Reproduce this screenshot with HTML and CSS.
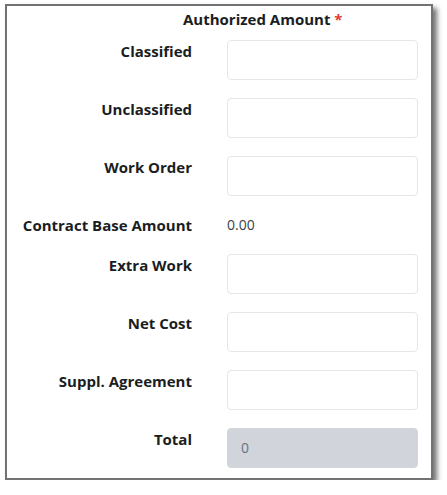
FILE: index.html
```html
<!DOCTYPE html>
<html>
<head>
<meta charset="utf-8">
<link rel="stylesheet" href="styles.css">
</head>
<body>
<div class="frame">
  <div class="heading">Authorized Amount <span class="req">*</span></div>
  <div class="rows">
    <div class="row"><div class="label">Classified</div><div class="input"></div></div>
    <div class="row"><div class="label">Unclassified</div><div class="input"></div></div>
    <div class="row"><div class="label">Work Order</div><div class="input"></div></div>
    <div class="row row-text"><div class="label">Contract Base Amount</div><div class="value">0.00</div></div>
    <div class="row"><div class="label">Extra Work</div><div class="input"></div></div>
    <div class="row"><div class="label">Net Cost</div><div class="input"></div></div>
    <div class="row"><div class="label">Suppl. Agreement</div><div class="input"></div></div>
    <div class="row"><div class="label">Total</div><div class="input input-disabled">0</div></div>
  </div>
</div>
</body>
</html>
```

FILE: styles.css
```css
html, body {
  margin: 0;
  padding: 0;
  background: #ffffff;
}
body {
  font-family: "Open Sans", "Noto Sans", sans-serif;
  font-size: 15px;
  color: #1a1d22;
}
.frame {
  box-sizing: border-box;
  width: 428px;
  margin: 4px 0 0 5px;
  border: 2px solid #727272;
  background: #ffffff;
  box-shadow: 4px 4px 5px rgba(0, 0, 0, 0.55);
  padding: 3px 0 10px 0;
}
.heading {
  font-weight: 700;
  line-height: 20px;
  padding-left: 176px;
  margin-bottom: 11px;
}
.req {
  color: #e53935;
}
.rows {
  display: flex;
  flex-direction: column;
  gap: 18px;
}
.row {
  display: grid;
  grid-template-columns: 185px 191px;
  column-gap: 35px;
  align-items: start;
}
.label {
  font-weight: 700;
  text-align: right;
  line-height: 20px;
  padding-top: 1px;
  white-space: nowrap;
}
.value {
  line-height: 22px;
  font-size: 14px;
  color: #3a3f45;
  font-weight: 400;
}
.input {
  box-sizing: border-box;
  height: 40px;
  border: 1px solid #e4e6ea;
  border-radius: 4px;
  background: #ffffff;
}
.input-disabled {
  background: #d1d5db;
  border-color: #d1d5db;
  color: #6b7280;
  font-size: 14px;
  line-height: 38px;
  padding-left: 13px;
}
```
